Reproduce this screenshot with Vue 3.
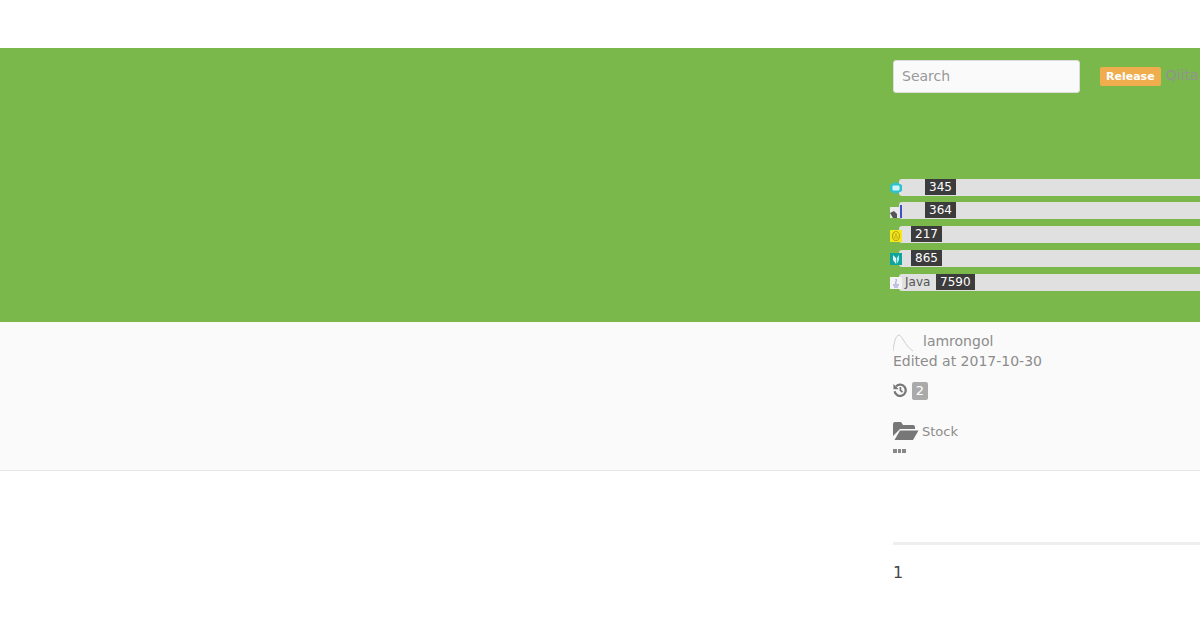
<template>
  <div class="page">
    <header class="topbar"></header>

    <section class="hero">
      <div class="column">
        <div class="search-row">
          <input class="search" type="text" placeholder="Search" />
          <span class="release">Release</span>
          <span class="site">Qiita</span>
        </div>
        <ul class="tags">
          <li v-for="tag in tags" :key="tag.count" class="tag">
            <span class="tag-icon">
              <svg v-if="tag.icon === 'cube'" viewBox="0 0 12 12" width="12" height="12">
                <path d="M6 0 12 3V9L6 12 0 9V3Z" fill="#2cc3cf" />
                <rect x="2.500" y="3.500" width="7" height="5" rx="1" fill="#d5f3f5" />
              </svg>
              <svg v-else-if="tag.icon === 'bar'" viewBox="0 0 12 13" width="12" height="13">
                <rect x="0" y="2" width="10" height="11" fill="#e9e9ee" />
                <path d="M0 8 4 6 7 9V13H3Z" fill="#555" />
                <rect x="10" y="0" width="2" height="13" fill="#3f51c4" />
              </svg>
              <svg v-else-if="tag.icon === 'bulb'" viewBox="0 0 12 12" width="12" height="12">
                <rect width="12" height="12" fill="#f6e71c" />
                <ellipse cx="6" cy="6" rx="3.500" ry="4.500" fill="none" stroke="#b5a615" stroke-width="1.200" />
                <path d="M6 3.500 7.500 8H4.500Z" fill="none" stroke="#b5a615" stroke-width="0.800" />
              </svg>
              <svg v-else-if="tag.icon === 'leaf'" viewBox="0 0 12 12" width="12" height="12">
                <rect width="12" height="12" fill="#10a59c" />
                <path d="M3 2 6 5V11L3 7Z" fill="#e6f7f5" />
                <path d="M9 2 6.700 5V11L9 7Z" fill="#b9ebe6" />
              </svg>
              <svg v-else viewBox="0 0 12 12" width="12" height="12">
                <rect width="12" height="12" fill="#f3f3f6" />
                <path d="M6 2C7 4 5 5 6 7M3 8H9M4 10H8" fill="none" stroke="#8b93c9" stroke-width="1" />
              </svg>
            </span>
            <span class="tag-bar">
              <span class="tag-name" :style="{ width: tag.nameWidth + 'px' }">{{ tag.name }}</span>
              <span class="tag-count">{{ tag.count }}</span>
            </span>
          </li>
        </ul>
      </div>
    </section>

    <section class="meta">
      <div class="column">
        <div class="author">
          <svg class="avatar" viewBox="0 0 20 18" width="20" height="18">
            <path d="M0 17C1 8 3 1 6 1 9 1 12 12 20 17" fill="none" stroke="#cfcfcf" stroke-width="1" />
          </svg>
          <span>lamrongol</span>
        </div>
        <div class="edited">Edited at 2017-10-30</div>
        <div class="history">
          <svg viewBox="0 0 16 16" width="14" height="14">
            <path d="M3.600 3.800A6.400 6.400 0 1 1 1.800 9.500" fill="none" stroke="#777" stroke-width="2.600" />
            <path d="M0.500 1V7H6.500Z" fill="#777" />
            <path d="M7.500 4.500H9.500V8L11.500 9.800 10.300 11 7.500 8.800Z" fill="#777" />
          </svg>
          <span class="history-count">2</span>
        </div>
        <div class="stock">
          <svg viewBox="0 0 26 20" width="26" height="20">
            <path d="M0 3A2 2 0 0 1 2 1H8L10 4H20A2 2 0 0 1 22 6V8H7L0 15Z" fill="#777" />
            <path d="M7 9.500H25.500L20 19H1.500Z" fill="#777" />
          </svg>
          <span>Stock</span>
        </div>
        <div class="dots"><i></i><i></i><i></i></div>
      </div>
    </section>

    <section class="body">
      <div class="column">
        <div class="toc-rule"></div>
        <div class="num">1</div>
      </div>
    </section>
  </div>
</template>

<script setup>
const tags = [
  { icon: 'cube', name: '', nameWidth: 26, count: 345 },
  { icon: 'bar', name: '', nameWidth: 26, count: 364 },
  { icon: 'bulb', name: '', nameWidth: 12, count: 217 },
  { icon: 'leaf', name: '', nameWidth: 12, count: 865 },
  { icon: 'cup', name: 'Java', nameWidth: 37, count: 7590 }
]
</script>

<style>
html, body { overflow: hidden; background: #fff; }
</style>

<style scoped>
.page {
  width: 1200px;
  height: 630px;
  overflow: hidden;
  font-family: "DejaVu Sans", sans-serif;
  color: #333;
}
.topbar { height: 48px; background: #fff; }
.column { margin-left: 893px; width: 400px; }

.hero { height: 274px; background: #7ab84b; overflow: hidden; }
.search-row { display: flex; align-items: center; padding-top: 12px; }
.search {
  box-sizing: border-box;
  width: 187px;
  height: 33px;
  padding: 0 8px 2px;
  border: 1px solid #ddd;
  border-radius: 3px;
  background: #fafafa;
  font: 14px "DejaVu Sans", sans-serif;
}
.search::placeholder { color: #999; }
.release {
  margin-left: 20px;
  padding: 0 6px;
  height: 19px;
  line-height: 19px;
  border-radius: 2px;
  background: #f0ad4e;
  color: #fff;
  font-size: 11px;
  font-weight: 700;
}
.site { margin: 0 0 3px 5px; color: #929292; font-size: 14px; }

.tags { list-style: none; margin: 85.600px 0 0 -3px; padding: 0; display: flex; flex-direction: column; gap: 6.800px; }
.tag { display: flex; height: 17px; align-items: center; }
.tag-icon { width: 12px; height: 13px; margin-top: 2px; flex: none; position: relative; z-index: 1; display: flex; align-items: center; }
.tag-bar {
  margin-left: -3px;
  flex: 1;
  height: 17px;
  display: flex;
  align-items: center;
  background: #e0e0e0;
  border-radius: 3px 0 0 3px;
  font-size: 12px;
}
.tag-name { box-sizing: border-box; padding-left: 6px; color: #555; }
.tag-count { background: #3c3c3c; color: #fff; padding: 0 4px; height: 16px; line-height: 16px; margin-top: -1px; }

.meta {
  box-sizing: border-box;
  height: 149px;
  background: #fafafa;
  border-bottom: 1px solid #e5e5e5;
  color: #8c8c8c;
  font-size: 14px;
  padding-top: 9px;
}
.author { display: flex; align-items: center; gap: 10px; height: 19px; }
.avatar { margin-top: 5px; }
.edited { margin-top: 1px; height: 20px; line-height: 20px; }
.history { display: flex; align-items: center; gap: 5px; margin-top: 11px; height: 18px; }
.history svg { margin-top: -2px; }
.history-count {
  background: #aaa;
  color: #fff;
  border-radius: 2px;
  width: 16px;
  height: 18px;
  line-height: 18px;
  text-align: center;
  font-size: 13px;
}
.stock { display: flex; align-items: center; gap: 3px; margin-top: 21px; font-size: 13px; height: 20px; }
.stock span { margin-top: 1px; }
.dots { display: flex; gap: 1px; margin-top: 8px; }
.dots i { width: 3.600px; height: 3.600px; background: #888; }

.toc-rule { margin-top: 71px; height: 3px; background: #eee; }
.num { margin-top: 18px; font-size: 16px; color: #444; }
</style>
